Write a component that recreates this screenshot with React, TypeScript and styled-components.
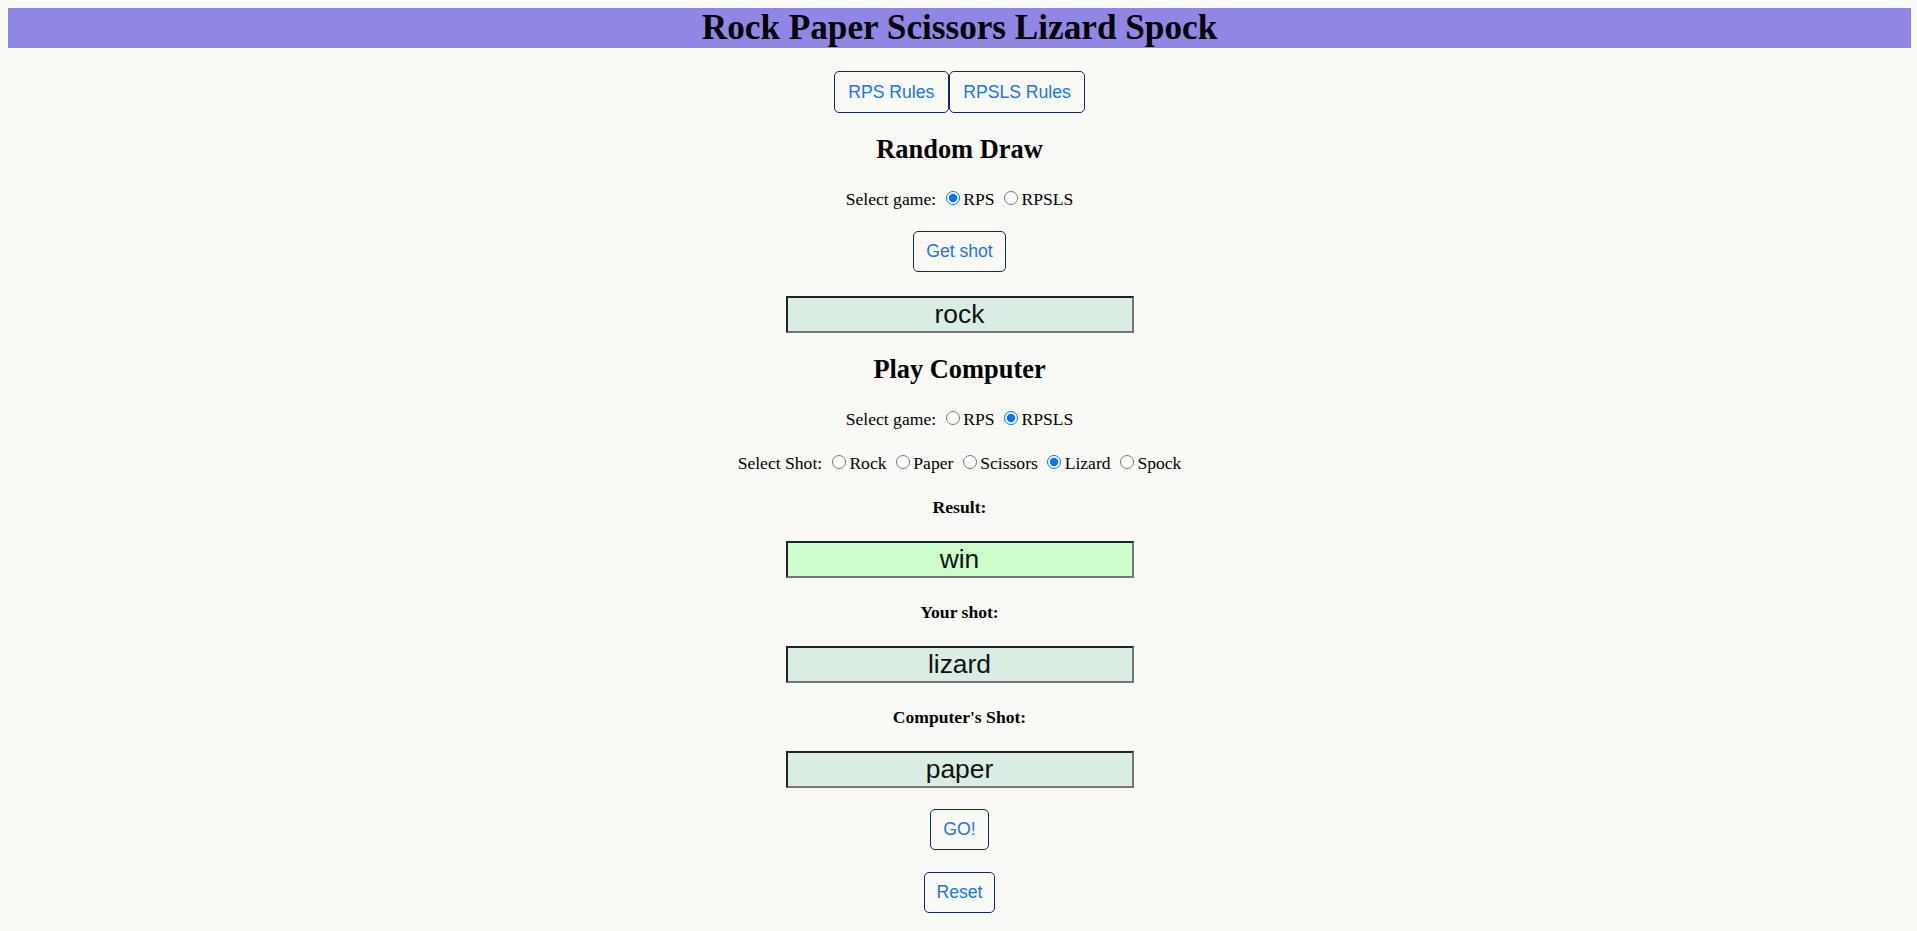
import styled, { createGlobalStyle } from "styled-components";

const GlobalStyle = createGlobalStyle`
  html, body {
    background: #f9faf5;
  }
  body {
    margin: 8px 6px 8px 8px;
    font-family: "Liberation Serif", "Times New Roman", serif;
    color: #000;
  }
`;

const RPS = ["RPS", "RPSLS"];
const SHOTS = ["Rock", "Paper", "Scissors", "Lizard", "Spock"];

const App = () => {
  return (
    <>
      <GlobalStyle />
      <Page>
        <Header>Rock Paper Scissors Lizard Spock</Header>
        <RulesBar>
          <RuleButton>RPS Rules</RuleButton>
          <RuleButton>RPSLS Rules</RuleButton>
        </RulesBar>

        <Heading>Random Draw</Heading>
        <RadioRow>
          Select game:{" "}
          {RPS.map((g) => (
            <Choice key={g}>
              <Radio type="radio" name="draw-game" defaultChecked={g === "RPS"} />
              {g}
            </Choice>
          ))}
        </RadioRow>
        <ActionButton>Get shot</ActionButton>
        <Output>rock</Output>

        <Heading>Play Computer</Heading>
        <RadioRow>
          Select game:{" "}
          {RPS.map((g) => (
            <Choice key={g}>
              <Radio type="radio" name="play-game" defaultChecked={g === "RPSLS"} />
              {g}
            </Choice>
          ))}
        </RadioRow>
        <RadioRow $top={24}>
          Select Shot:{" "}
          {SHOTS.map((s) => (
            <Choice key={s}>
              <Radio type="radio" name="shot" defaultChecked={s === "Lizard"} />
              {s}
            </Choice>
          ))}
        </RadioRow>

        <Label>Result:</Label>
        <Output $result>win</Output>
        <Label>Your shot:</Label>
        <Output>lizard</Output>
        <Label>Computer's Shot:</Label>
        <Output>paper</Output>

        <ActionButton $top={21}>GO!</ActionButton>
        <ActionButton>Reset</ActionButton>
      </Page>
    </>
  );
};

export default App;

const Page = styled.div`
  display: flex;
  flex-direction: column;
  align-items: center;
`;

const Header = styled.h1`
  align-self: stretch;
  margin: 0;
  height: 40px;
  line-height: 40px;
  background-color: #9086e4;
  font-size: 35.2px;
  font-weight: bold;
  text-align: center;
`;

const RulesBar = styled.div`
  display: flex;
  margin-top: 23px;
`;

const Button = styled.button`
  height: 42px;
  padding: 0 12px;
  background: transparent;
  border: 1px solid #0b2b62;
  border-radius: 5px;
  color: #1a73f0;
  font-family: "Liberation Sans", Arial, sans-serif;
  font-size: 17.6px;
  cursor: pointer;
`;

const RuleButton = styled(Button)`
  padding: 0 13.5px;
`;

const ActionButton = styled(Button)<{ $top?: number }>`
  height: 41px;
  margin-top: ${(p) => p.$top ?? 22}px;
`;

const Heading = styled.h2`
  margin: 22px 0 0;
  line-height: 28px;
  font-size: 26.4px;
  font-weight: bold;
`;

const RadioRow = styled.div<{ $top?: number }>`
  margin-top: ${(p) => p.$top ?? 26}px;
  line-height: 20px;
  font-size: 17.6px;
  white-space: nowrap;
`;

const Choice = styled.label`
  margin-right: 4px;
  &:last-child {
    margin-right: 0;
  }
`;

const Radio = styled.input`
  width: 14px;
  height: 14px;
  margin: 2px 3.3px 0 5.5px;
  vertical-align: top;
`;

const Label = styled.div`
  margin-top: 25px;
  line-height: 19px;
  font-size: 17.6px;
  font-weight: bold;
`;

const Output = styled.div<{ $result?: boolean }>`
  box-sizing: border-box;
  width: 348px;
  height: 37px;
  margin-top: 24px;
  border: 2px solid;
  border-color: #222 #767676 #767676 #222;
  background-color: ${(p) => (p.$result ? "#ccffcc" : "#d9ede3")};
  font-family: "Liberation Sans", Arial, sans-serif;
  font-size: 26.4px;
  line-height: 32px;
  text-align: center;
  color: #111;
`;
